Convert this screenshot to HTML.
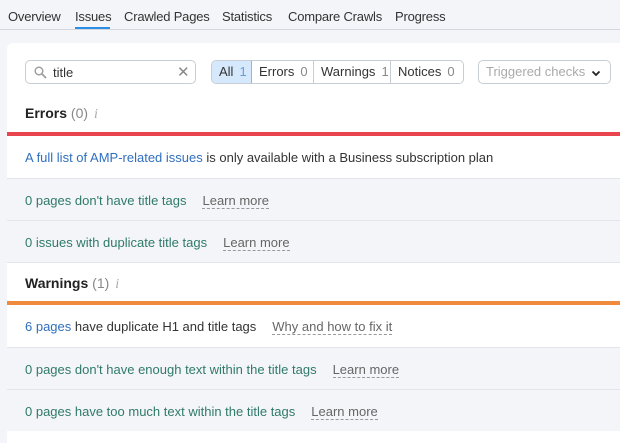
<!DOCTYPE html><html><head><style>
*{box-sizing:border-box;margin:0;padding:0}
body{width:620px;height:436px;overflow:hidden;background:#f4f5f9;font-family:"Liberation Sans",Arial,sans-serif;font-size:13px;color:#333;position:relative}
.tabs{position:absolute;left:0;top:0;width:620px;height:30px;border-bottom:1px solid #d5d8df}
.tab{position:absolute;top:9px;font-size:13px;color:#333;letter-spacing:-0.2px}
.ul{position:absolute;left:75px;top:27px;width:35px;height:2px;background:#2d8ee6}
.panel{position:absolute;left:7px;top:43px;width:620px;height:400px;background:#fff;border-radius:6px 0 0 0;overflow:hidden}
.abs{position:absolute}
.search{left:18px;top:17px;width:171px;height:24px;border:1px solid #c8ccd4;border-radius:5px}
.grp{left:204px;top:17px;width:253px;height:24px;border:1px solid #c8ccd4;border-radius:5px;display:flex;overflow:hidden}
.grp div{height:22px;line-height:22px;padding:0 7px;border-right:1px solid #c8ccd4;font-size:13px}
.grp div:last-child{border-right:none;flex:1}
.grp span{color:#888;margin-left:6px}
.trig{left:471px;top:17px;width:133px;height:24px;border:1px solid #c8ccd4;border-radius:5px;color:#aaa;line-height:22px;padding-left:7px}
.row{position:absolute;left:0;width:620px;height:42px;line-height:44px;padding-left:18px;border-top:1px solid #e3e5ea}
.g{background:#f4f5f9;color:#2f7a6b}
.lm{color:#666;border-bottom:1px dashed #999;line-height:14px;display:inline-block;margin-left:16px}
.blue{color:#2f6fbf}
h3{position:absolute;left:18px;font-size:14px;font-weight:bold;color:#222}
h3 span{font-weight:normal;color:#888}
h3 i{font-family:"Liberation Serif",serif;color:#aaa;font-weight:normal;margin-left:6px}
</style></head><body>
<div class="tabs">
<span class="tab" style="left:8px">Overview</span>
<span class="tab" style="left:75px">Issues</span>
<span class="tab" style="left:124px">Crawled Pages</span>
<span class="tab" style="left:222px">Statistics</span>
<span class="tab" style="left:288px">Compare Crawls</span>
<span class="tab" style="left:395px">Progress</span>
<div class="ul"></div>
</div>
<div class="panel">
<div class="abs search"><svg class="abs" style="left:8px;top:5px" width="13" height="13" viewBox="0 0 13 13"><circle cx="5" cy="5" r="3.8" fill="none" stroke="#999" stroke-width="1.4"/><path d="M8 8l4 4" stroke="#999" stroke-width="1.6"/></svg><span class="abs" style="left:27px;top:4px">title</span><span class="abs" style="left:151px;top:2px;color:#888;font-size:15px">✕</span></div>
<div class="abs grp"><div style="background:#d6e8fb;color:#333;border-right-color:#8fb8e6;width:40px">All<span style="color:#6a9ad6">1</span></div><div style="width:62px">Errors<span>0</span></div><div style="width:77px">Warnings<span>1</span></div><div>Notices<span>0</span></div></div>
<div class="abs trig">Triggered checks<svg class="abs" style="left:112px;top:9px" width="10" height="7" viewBox="0 0 10 7"><path d="M1.5 1.5l3.5 3.5 3.5-3.5" fill="none" stroke="#222" stroke-width="1.8"/></svg></div>
<h3 style="top:62px">Errors <span>(0)</span><i>i</i></h3>
<div class="abs" style="left:0;top:89px;width:620px;height:4px;background:#e8454e"></div>
<div class="row" style="top:93px;border-top:none;color:#333"><span class="blue">A full list of AMP-related issues</span> is only available with a Business subscription plan</div>
<div class="row g" style="top:135px">0 pages don't have title tags<span class="lm">Learn more</span></div>
<div class="row g" style="top:177px">0 issues with duplicate title tags<span class="lm">Learn more</span></div>
<div class="row" style="top:219px;background:#fff;height:40px"></div>
<h3 style="top:232px">Warnings <span>(1)</span><i>i</i></h3>
<div class="abs" style="left:0;top:258px;width:620px;height:4px;background:#f08a3c"></div>
<div class="row" style="top:262px;border-top:none;color:#333"><span class="blue">6 pages</span> have duplicate H1 and title tags<span class="lm">Why and how to fix it</span></div>
<div class="row g" style="top:304px">0 pages don't have enough text within the title tags<span class="lm">Learn more</span></div>
<div class="row g" style="top:346px">0 pages have too much text within the title tags<span class="lm">Learn more</span></div>
</div>
</body></html>
